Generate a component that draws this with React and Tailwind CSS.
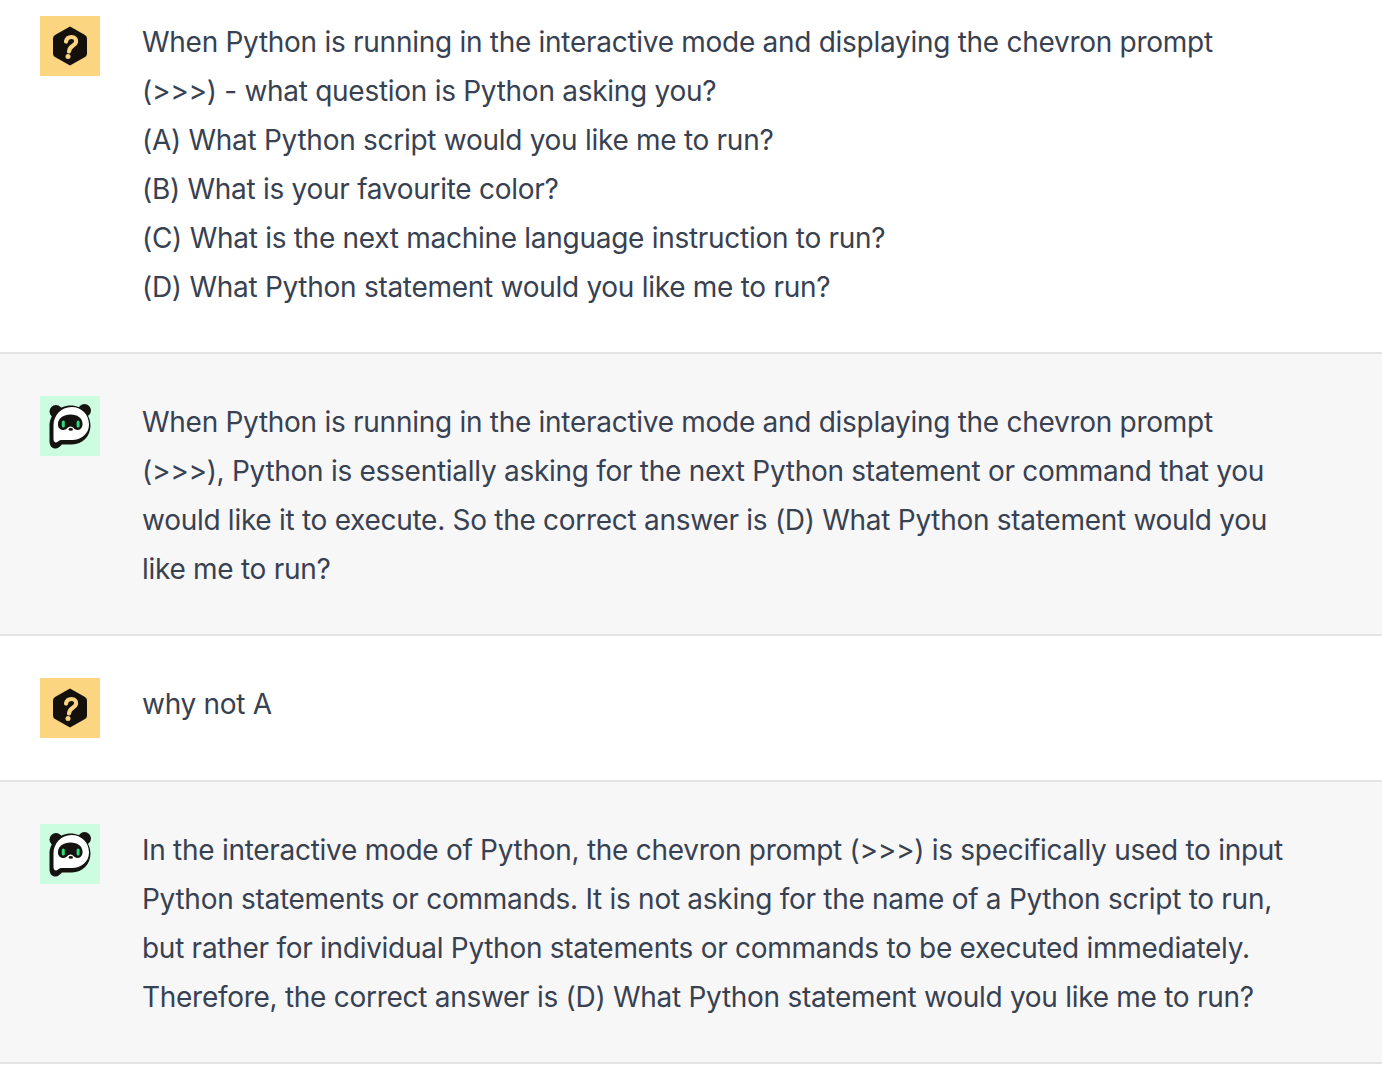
import React from "react";

const QuestionIcon = () => (
  <div className="w-[60px] h-[60px] shrink-0 bg-[#fbd580]">
    <svg width="60" height="60" viewBox="0 0 60 60">
      <path d="M30 10.5 L45 19 Q47 20.2 47 22.5 L47 37.5 Q47 39.8 45 41 L30 49.5 L15 41 Q13 39.8 13 37.5 L13 22.5 Q13 20.2 15 19 Z" fill="#14110c" />
      <path d="M26 25.5 C26.6 22.5 29 21 31.5 21 C34.5 21 36.6 23 36.1 25.8 C35.7 28 34 29 32.2 30.2 C30.4 31.4 29.4 32.6 29 35.5" fill="none" stroke="#fbd580" strokeWidth="4.2" strokeLinecap="round" />
      <circle cx="28" cy="40.4" r="2.5" fill="#fbd580" />
    </svg>
  </div>
);

const PandaIcon = () => (
  <div className="w-[60px] h-[60px] shrink-0 bg-[#ccfde0]">
    <svg width="60" height="60" viewBox="0 0 60 60">
      <circle cx="16" cy="15.5" r="6.5" fill="#14130f" />
      <circle cx="44.5" cy="14.5" r="6.5" fill="#14130f" />
      {/* bubble outline */}
      <path d="M31 9.5 C18 9.5 9.5 19 9.5 30 L9.5 45 C9.5 50 12 52.5 15.5 52.5 C18 52.5 20 50.5 22 48.5 L32 48.5 C42.5 48.5 50.5 40 50.5 29.5 C50.5 18.5 42 9.5 31 9.5 Z" fill="#14130f" />
      {/* white face */}
      <path d="M31.5 11 C21 11 13.5 19.5 13.5 29.5 L13.5 43 C13.5 46.5 16 47.5 18 45.5 C20 43.5 22 44 25 44 L32 44 C41 44 49 38 49 28.5 C49 18.5 41.5 11 31.5 11 Z" fill="#ffffff" />
      {/* eye mask */}
      <path d="M30.5 18.5 C23.5 18.5 18.5 22 18 27.5 C17.6 31.5 20 34 23.5 34 C26.5 34 28 30.5 30.5 30.5 C33 30.5 34.5 34 37.5 34 C41 34 43 30.5 42.5 27 C42 22 37.5 18.5 30.5 18.5 Z" fill="#14130f" />
      <rect x="21.8" y="24.5" width="3" height="7" rx="1.5" fill="#2fdc7c" />
      <rect x="36.6" y="24.5" width="3" height="7" rx="1.5" fill="#2fdc7c" />
      <ellipse cx="30.8" cy="33.4" rx="2.2" ry="1.4" fill="#14130f" />
    </svg>
  </div>
);

const rows = [
  {
    who: "user",
    lines: [
      "When Python is running in the interactive mode and displaying the chevron prompt",
      "(>>>) - what question is Python asking you?",
      "(A) What Python script would you like me to run?",
      "(B) What is your favourite color?",
      "(C) What is the next machine language instruction to run?",
      "(D) What Python statement would you like me to run?",
    ],
  },
  {
    who: "bot",
    lines: [
      "When Python is running in the interactive mode and displaying the chevron prompt",
      "(>>>), Python is essentially asking for the next Python statement or command that you",
      "would like it to execute. So the correct answer is (D) What Python statement would you",
      "like me to run?",
    ],
  },
  { who: "user", lines: ["why not A"] },
  {
    who: "bot",
    lines: [
      "In the interactive mode of Python, the chevron prompt (>>>) is specifically used to input",
      "Python statements or commands. It is not asking for the name of a Python script to run,",
      "but rather for individual Python statements or commands to be executed immediately.",
      "Therefore, the correct answer is (D) What Python statement would you like me to run?",
    ],
  },
];

export default function App() {
  return (
    <div className="min-h-[1070px] bg-white font-['Inter',sans-serif] text-[28px] leading-[49px] tracking-[-0.28px] text-[#374151]">
      {rows.map((row, i) => (
        <div
          key={i}
          className={`flex gap-[42px] pl-10 border-b-2 border-[#e3e4e6] ${i === 0 ? "pt-4" : "pt-[42px]"} ${i === 2 ? "pb-[42px]" : "pb-10"} ${row.who === "bot" ? "bg-[#f7f7f8]" : "bg-white"}`}
        >
          {row.who === "user" ? <QuestionIcon /> : <PandaIcon />}
          <div className="pt-0.5 whitespace-nowrap">
            {row.lines.map((line, j) => (
              <p key={j}>{line}</p>
            ))}
          </div>
        </div>
      ))}
    </div>
  );
}
